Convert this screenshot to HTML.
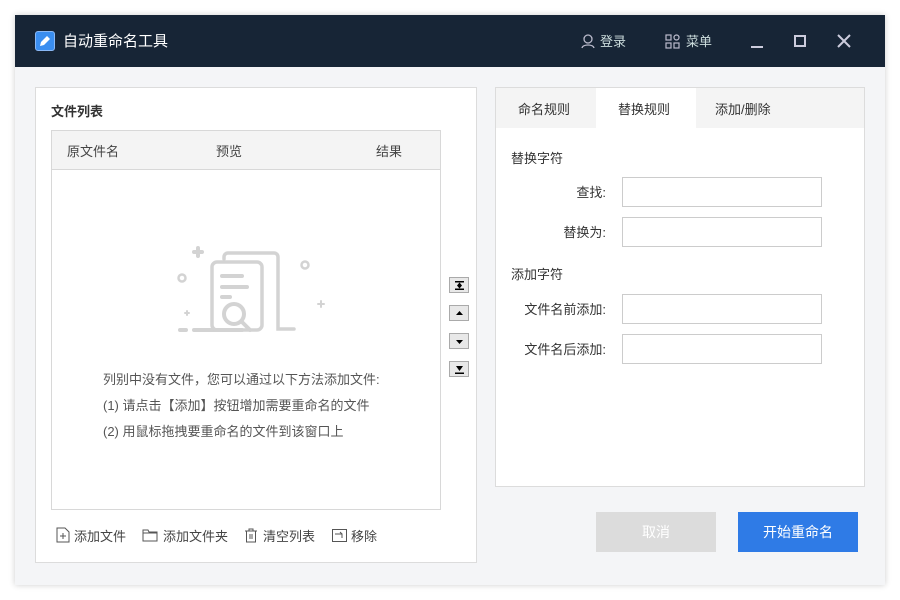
<!DOCTYPE html>
<html><head><meta charset="utf-8"><style>
*{margin:0;padding:0;box-sizing:border-box}
body{width:900px;height:600px;background:#fff;font-family:"Liberation Sans","Noto Sans CJK SC",sans-serif;font-size:13px;line-height:15px;color:#333;position:relative;overflow:hidden}
.win{position:absolute;left:15px;top:15px;width:870px;height:570px;background:#f4f5f7;box-shadow:0 0 6px rgba(0,0,0,.2)}
.tb{position:absolute;left:0;top:0;width:870px;height:52px;background:#172536;color:#fff}
.a{position:absolute}
.panel{position:absolute;background:#fff;border:1px solid #dcdcdc}
.inp{position:absolute;left:126px;width:200px;height:30px;border:1px solid #ccc;background:#fff}
.lbl{position:absolute;text-align:right;width:110px;left:0}
.sb{position:absolute;left:413px;width:20px;height:16px;border:1px solid #aaa;background:#e8e8e8}
.sb svg{position:absolute;left:5px;top:3px}
</style></head><body>
<div class="win">
 <div class="tb">
  <div class="a" style="left:20px;top:16px;width:20px;height:20px;background:#3a8ef0;border-radius:3px;border:1px solid #8ab8f5"><svg width="18" height="18" viewBox="0 0 18 18"><path d="M4 14l1-4 6-6 3 3-6 6z" fill="#fff"/></svg></div>
  <div class="a" style="left:48px;top:18px;font-size:15px;line-height:17px">自动重命名工具</div>
  <svg class="a" style="left:565px;top:18px" width="16" height="16" viewBox="0 0 16 16" fill="none" stroke="#bbc" stroke-width="1.3"><circle cx="8" cy="6" r="4"/><path d="M2 15c1-4 11-4 12 0"/></svg>
  <div class="a" style="left:585px;top:19px;color:#cdd">登录</div>
  <svg class="a" style="left:650px;top:19px" width="15" height="15" viewBox="0 0 15 15" fill="none" stroke="#bbc" stroke-width="1.2"><rect x="1" y="1" width="5" height="5"/><rect x="9" y="1" width="5" height="5" rx="2.5"/><rect x="1" y="9" width="5" height="5"/><rect x="9" y="9" width="5" height="5"/></svg>
  <div class="a" style="left:671px;top:19px;color:#cdd">菜单</div>
  <div class="a" style="left:736px;top:31px;width:12px;height:2px;background:#ccd"></div>
  <div class="a" style="left:779px;top:20px;width:12px;height:12px;border:2px solid #ccd"></div>
  <svg class="a" style="left:822px;top:19px" width="14" height="14" viewBox="0 0 14 14" stroke="#ccd" stroke-width="2"><path d="M1 1l12 12M13 1L1 13"/></svg>
 </div>
 <div class="panel" style="left:20px;top:72px;width:442px;height:476px">
  <div class="a" style="left:15px;top:16px;font-weight:bold">文件列表</div>
  <div class="a" style="left:15px;top:42px;width:390px;height:380px;border:1px solid #d8d8d8">
   <div class="a" style="left:0;top:0;width:388px;height:39px;background:#f4f4f4;border-bottom:1px solid #d8d8d8;color:#444">
    <span class="a" style="left:15px;top:13px">原文件名</span><span class="a" style="left:164px;top:13px">预览</span><span class="a" style="left:324px;top:13px">结果</span>
   </div>
   <svg class="a" style="left:120px;top:112px" width="160" height="100" viewBox="0 0 160 100" fill="none" stroke="#d3d3d3" stroke-width="4" stroke-linecap="round">
    <path d="M26 5v8M22 9h8M8 87h6M22 87h48"/><circle cx="10" cy="35" r="3.5" stroke-width="2.5"/><circle cx="133" cy="22" r="3.5" stroke-width="2.5"/><path d="M149 58v6M146 61h6M15 68v4M13 70h4" stroke-width="2"/>
    <path d="M52 16v-2a4 4 0 014-4h46a4 4 0 014 4v72h16" stroke-width="3.5"/>
    <rect x="40" y="19" width="50" height="68" rx="5" stroke-width="3.5"/>
    <path d="M50 33h20M50 44h25M50 54h8"/><circle cx="62" cy="71" r="10"/><path d="M70 79l8 8"/>
   </svg>
   <div class="a" style="left:51px;top:236px;color:#555;line-height:26px">列别中没有文件，您可以通过以下方法添加文件:<br>(1) 请点击【添加】按钮增加需要重命名的文件<br>(2) 用鼠标拖拽要重命名的文件到该窗口上</div>
  </div>
  <div class="sb" style="top:189px"><svg width="9" height="9" viewBox="0 0 9 9"><path d="M0 0h9v1.5H0zM0 7.5h9V9H0zM4.5 1.5L7 4.5H2zM4.5 7.5L7 4.5H2z" fill="#000"/></svg></div>
  <div class="sb" style="top:217px"><svg width="9" height="9" viewBox="0 0 9 9"><path d="M4.5 2L8 6H1z" fill="#000"/></svg></div>
  <div class="sb" style="top:245px"><svg width="9" height="9" viewBox="0 0 9 9"><path d="M4.5 7L8 3H1z" fill="#000"/></svg></div>
  <div class="sb" style="top:273px"><svg width="9" height="9" viewBox="0 0 9 9"><path d="M4.5 6L8 1H1zM0 7.5h9V9H0z" fill="#000"/></svg></div>
  <svg class="a" style="left:20px;top:439px" width="14" height="16" viewBox="0 0 14 16" fill="none" stroke="#555"><path d="M1 1h8l4 4v10H1z M4 9h6M7 6v6"/></svg>
  <div class="a" style="left:38px;top:441px;color:#444">添加文件</div>
  <svg class="a" style="left:106px;top:441px" width="16" height="13" viewBox="0 0 16 13" fill="none" stroke="#555"><path d="M1 1h5l1 2h8v9H1z M1 4h14"/></svg>
  <div class="a" style="left:127px;top:441px;color:#444">添加文件夹</div>
  <svg class="a" style="left:208px;top:440px" width="14" height="15" viewBox="0 0 14 15" fill="none" stroke="#555"><path d="M1 3h12M5 3V1h4v2M2.5 3v11h9V3M6 6v5M8 6v5"/></svg>
  <div class="a" style="left:227px;top:441px;color:#444">清空列表</div>
  <svg class="a" style="left:296px;top:441px" width="15" height="13" viewBox="0 0 15 13" fill="none" stroke="#555"><rect x="0.5" y="0.5" width="14" height="12"/><path d="M3 5h7v4M8 3l2 2"/></svg>
  <div class="a" style="left:315px;top:441px;color:#444">移除</div>
 </div>
 <div class="panel" style="left:480px;top:72px;width:370px;height:400px">
  <div class="a" style="left:0;top:0;width:368px;height:40px;background:#f4f4f4"></div>
  <div class="a" style="left:100px;top:0;width:100px;height:40px;background:#fff"></div>
  <div class="a" style="left:22px;top:14px">命名规则</div>
  <div class="a" style="left:122px;top:14px">替换规则</div>
  <div class="a" style="left:219px;top:14px">添加/删除</div>
  <div class="a" style="left:15px;top:63px">替换字符</div>
  <div class="lbl" style="top:97px">查找:</div><div class="inp" style="top:89px"></div>
  <div class="lbl" style="top:137px">替换为:</div><div class="inp" style="top:129px"></div>
  <div class="a" style="left:15px;top:179px">添加字符</div>
  <div class="lbl" style="top:214px">文件名前添加:</div><div class="inp" style="top:206px"></div>
  <div class="lbl" style="top:254px">文件名后添加:</div><div class="inp" style="top:246px"></div>
 </div>
 <div class="a" style="left:581px;top:497px;width:120px;height:40px;background:#dcdcdc;color:#fff;text-align:center;line-height:40px;font-size:14px">取消</div>
 <div class="a" style="left:723px;top:497px;width:120px;height:40px;background:#2f7be6;color:#fff;text-align:center;line-height:40px;font-size:14px">开始重命名</div>
</div>
</body></html>
